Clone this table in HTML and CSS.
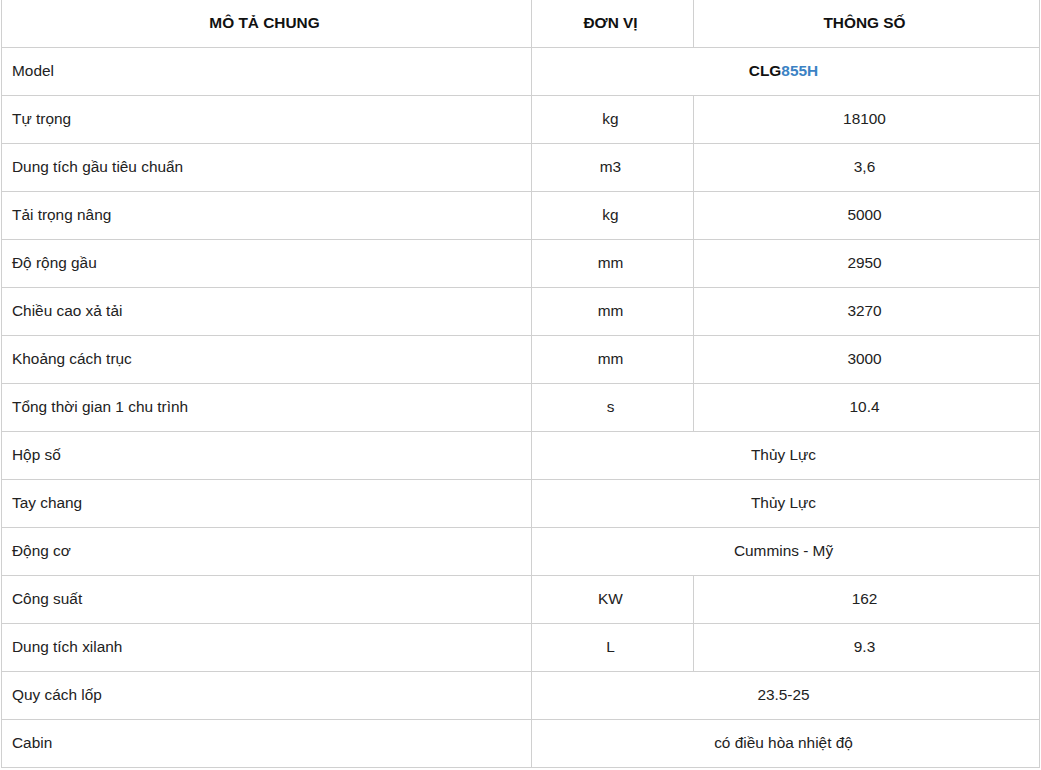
FILE: index.html
```html
<!DOCTYPE html>
<html lang="vi">
<head>
<meta charset="utf-8">
<link rel="stylesheet" href="styles.css">
</head>
<body>
<table class="spec">
  <colgroup><col class="c1"><col class="c2"><col class="c3"></colgroup>
  <thead>
    <tr><th>MÔ TẢ CHUNG</th><th>ĐƠN VỊ</th><th>THÔNG SỐ</th></tr>
  </thead>
  <tbody>
    <tr><td>Model</td><td colspan="2" class="ctr"><strong>CLG<span class="blue">855H</span></strong></td></tr>
    <tr><td>Tự trọng</td><td class="ctr">kg</td><td class="ctr">18100</td></tr>
    <tr><td>Dung tích gầu tiêu chuẩn</td><td class="ctr">m3</td><td class="ctr">3,6</td></tr>
    <tr><td>Tải trọng nâng</td><td class="ctr">kg</td><td class="ctr">5000</td></tr>
    <tr><td>Độ rộng gầu</td><td class="ctr">mm</td><td class="ctr">2950</td></tr>
    <tr><td>Chiều cao xả tải</td><td class="ctr">mm</td><td class="ctr">3270</td></tr>
    <tr><td>Khoảng cách trục</td><td class="ctr">mm</td><td class="ctr">3000</td></tr>
    <tr><td>Tổng thời gian 1 chu trình</td><td class="ctr">s</td><td class="ctr">10.4</td></tr>
    <tr><td>Hộp số</td><td colspan="2" class="ctr">Thủy Lực</td></tr>
    <tr><td>Tay chang</td><td colspan="2" class="ctr">Thủy Lực</td></tr>
    <tr><td>Động cơ</td><td colspan="2" class="ctr">Cummins - Mỹ</td></tr>
    <tr><td>Công suất</td><td class="ctr">KW</td><td class="ctr">162</td></tr>
    <tr><td>Dung tích xilanh</td><td class="ctr">L</td><td class="ctr">9.3</td></tr>
    <tr><td>Quy cách lốp</td><td colspan="2" class="ctr">23.5-25</td></tr>
    <tr><td>Cabin</td><td colspan="2" class="ctr">có điều hòa nhiệt độ</td></tr>
  </tbody>
</table>
</body>
</html>
```
FILE: styles.css
```css
html, body {
  margin: 0;
  padding: 0;
  background: #fff;
}
body {
  font-family: "Liberation Sans", Arial, sans-serif;
  font-size: 15.4px;
  color: #222;
}
.spec {
  border-collapse: collapse;
  table-layout: fixed;
  width: 1038px;
  margin: -1px 0 0 1px;
}
.c1 { width: 530px; }
.c2 { width: 162px; }
.c3 { width: 346px; }
.spec th, .spec td {
  border: 1px solid #d0d0d0;
  height: 48px;
  padding: 0 10px 2px 10px;
  vertical-align: middle;
  line-height: 20px;
  box-sizing: border-box;
}
.spec th {
  font-weight: bold;
  text-align: center;
  color: #111;
  padding: 0 13px 2px 9px;
}
.spec td { text-align: left; }
.spec td.ctr {
  text-align: center;
  padding: 0 13px 2px 9px;
}
.spec strong { color: #111; }
.blue { color: #3b82c4; }
```
